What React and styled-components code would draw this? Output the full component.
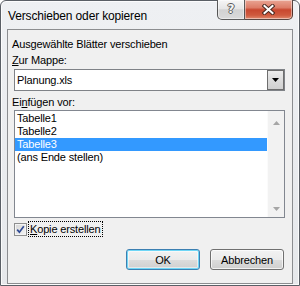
import React from 'react';
import styled, { createGlobalStyle, css } from 'styled-components';

const GlobalStyle = createGlobalStyle`
  html, body {
    margin: 0;
    padding: 0;
    background: #ffffff;
  }
  body {
    font-family: "Liberation Sans", Arial, sans-serif;
    color: #000;
  }
`;

const Window = styled.div`
  box-sizing: border-box;
  width: 300px;
  height: 286px;
  border: 1px solid #5a5f66;
  border-radius: 6px 6px 0 0;
  background: linear-gradient(#eef0f3, #e6e8eb);
  box-shadow: inset 0 0 0 1px rgba(255, 255, 255, 0.8);
  padding: 0 6px 1px 6px;
  display: flex;
  flex-direction: column;
`;

const TitleBar = styled.div`
  height: 28px;
  display: flex;
  align-items: flex-start;
`;

const TitleText = styled.div`
  padding: 7px 0 0 1px;
  font-size: 12px;
  line-height: 16px;
  letter-spacing: -0.15px;
`;

const CaptionGroup = styled.div`
  margin-left: auto;
  margin-top: -1px;
  display: flex;
`;

const CaptionButton = styled.div`
  box-sizing: border-box;
  height: 20px;
  display: flex;
  align-items: center;
  justify-content: center;
  border: 1px solid rgba(40, 40, 40, 0.75);
  border-top: none;
  box-shadow: inset 0 0 0 1px rgba(255, 255, 255, 0.45);
  ${(p) =>
    p.$close
      ? css`
          width: 48px;
          border-left: none;
          border-radius: 0 0 5px 0;
          background: linear-gradient(#e9a594 0%, #dd7d68 40%, #c8472f 52%, #cf5a3e 80%, #e08a6e 100%);
        `
      : css`
          width: 28px;
          border-radius: 0 0 0 5px;
          background: linear-gradient(#f6f6f6 0%, #e6e6e6 45%, #d2d2d2 52%, #dadada 100%);
        `}
`;

const HelpGlyph = styled.span`
  font-family: "DejaVu Sans", sans-serif;
  font-weight: bold;
  font-size: 12px;
  line-height: 12px;
  margin-top: -1px;
  color: #f4f4f4;
  text-shadow: 1px 0 0 #5c5c5c, -1px 0 0 #5c5c5c, 0 1px 0 #5c5c5c, 0 -1px 0 #5c5c5c;
`;

const Client = styled.div`
  flex: 1;
  box-sizing: border-box;
  border: 1px solid #8b8d90;
  background: #f0f0f0;
  padding: 6px 7px 0 4px;
  display: flex;
  flex-direction: column;
  font-size: 11px;
  letter-spacing: -0.15px;
`;

const Label = styled.div`
  height: 16px;
  line-height: 16px;
  margin-top: ${(p) => p.$gap || 0}px;
  white-space: nowrap;
`;

const Key = styled.span`
  text-decoration: underline;
  text-underline-offset: 1px;
`;

const Combo = styled.div`
  box-sizing: border-box;
  margin: 1px 0 0 2px;
  height: 22px;
  border: 1px solid #7f8287;
  background: #fff;
  display: flex;
  align-items: stretch;
`;

const ComboText = styled.div`
  flex: 1;
  padding-left: 2px;
  line-height: 20px;
`;

const DropButton = styled.div`
  box-sizing: border-box;
  width: 17px;
  border: 1px solid #6e6e6e;
  background: linear-gradient(#ececec, #dcdcdc 50%, #d0d0d0);
  display: flex;
  align-items: center;
  justify-content: center;
`;

const ListBox = styled.div`
  box-sizing: border-box;
  margin: 0 0 0 2px;
  height: 108px;
  border: 1px solid #828790;
  background: #fff;
  display: flex;
`;

const Items = styled.div`
  flex: 1;
  padding-top: 1px;
`;

const Item = styled.div`
  height: 13px;
  line-height: 13px;
  padding-left: 2px;
  white-space: nowrap;
  background: ${(p) => (p.$selected ? '#3399ff' : 'transparent')};
  color: ${(p) => (p.$selected ? '#ffffff' : '#000000')};
`;

const ScrollBar = styled.div`
  width: 17px;
  box-sizing: border-box;
  border-left: 1px solid #fbfbfb;
  background: #f2f2f2;
  display: flex;
  flex-direction: column;
  justify-content: space-between;
`;

const ScrollArrow = styled.div`
  height: 17px;
  display: flex;
  align-items: center;
  justify-content: center;
  padding-top: ${(p) => (p.$down ? 0 : 3)}px;
`;

const CheckRow = styled.div`
  margin: 3px 0 0 2px;
  height: 16px;
  display: flex;
  align-items: flex-start;
`;

const CheckBox = styled.div`
  box-sizing: border-box;
  width: 13px;
  height: 13px;
  margin-top: 2px;
  border: 1px solid #8e8f8f;
  background: linear-gradient(135deg, #d6d6d6, #f4f4f4);
  box-shadow: inset 0 0 0 1px #f4f4f4;
  display: flex;
  align-items: center;
  justify-content: center;
`;

const CheckLabel = styled.div`
  box-sizing: border-box;
  margin-left: 1px;
  height: 16px;
  padding: 0 1px;
  line-height: 14px;
  border: 1px dotted #000;
`;

const ButtonRow = styled.div`
  margin-top: 12px;
  padding-right: 1px;
  display: flex;
  justify-content: flex-end;
  gap: 10px;
`;

const Button = styled.div`
  box-sizing: border-box;
  width: 74px;
  height: 21px;
  border-radius: 3px;
  display: flex;
  align-items: center;
  justify-content: center;
  background: linear-gradient(#f2f2f2 0%, #ebebeb 50%, #dddddd 51%, #cfcfcf 100%);
  ${(p) =>
    p.$default
      ? css`
          border: 1px solid #3c7fb1;
          box-shadow: inset 0 0 0 1px #6fd6f6, inset 0 0 0 2px rgba(255, 255, 255, 0.5);
        `
      : css`
          border: 1px solid #707070;
          box-shadow: inset 0 0 0 1px rgba(255, 255, 255, 0.7);
        `}
`;

const CloseIcon = () => (
  <svg width="13" height="11" viewBox="0 0 13 11">
    <path d="M2.5 2 L10.5 9 M10.5 2 L2.5 9" stroke="#4a2a22" strokeWidth="4" strokeLinecap="square" />
    <path d="M2.5 2 L10.5 9 M10.5 2 L2.5 9" stroke="#ffffff" strokeWidth="2" strokeLinecap="square" />
  </svg>
);

const Triangle = ({ down, color, w = 7, h = 4 }) => (
  <svg width={w} height={h} viewBox={`0 0 ${w} ${h}`}>
    <path d={down ? `M0 0 H${w} L${w / 2} ${h} Z` : `M0 ${h} H${w} L${w / 2} 0 Z`} fill={color} />
  </svg>
);

const CheckMark = () => (
  <svg width="9" height="9" viewBox="0 0 9 9">
    <path d="M1.2 4.6 L3.4 7.2 L7.8 1.2" stroke="#2f4a94" strokeWidth="1.7" fill="none" />
  </svg>
);

const sheets = ['Tabelle1', 'Tabelle2', 'Tabelle3', '(ans Ende stellen)'];

export default function App() {
  return (
    <>
      <GlobalStyle />
      <Window>
        <TitleBar>
          <TitleText>Verschieben oder kopieren</TitleText>
          <CaptionGroup>
            <CaptionButton>
              <HelpGlyph>?</HelpGlyph>
            </CaptionButton>
            <CaptionButton $close>
              <CloseIcon />
            </CaptionButton>
          </CaptionGroup>
        </TitleBar>
        <Client>
          <Label>Ausgewählte Blätter verschieben</Label>
          <Label>
            <Key>Z</Key>ur Mappe:
          </Label>
          <Combo>
            <ComboText>Planung.xls</ComboText>
            <DropButton>
              <Triangle down color="#000" />
            </DropButton>
          </Combo>
          <Label $gap={3}>
            Ei<Key>n</Key>fügen vor:
          </Label>
          <ListBox>
            <Items>
              {sheets.map((s, i) => (
                <Item key={s} $selected={i === 2}>
                  {s}
                </Item>
              ))}
            </Items>
            <ScrollBar>
              <ScrollArrow>
                <Triangle color="#a6a6a6" />
              </ScrollArrow>
              <ScrollArrow $down>
                <Triangle down color="#a6a6a6" />
              </ScrollArrow>
            </ScrollBar>
          </ListBox>
          <CheckRow>
            <CheckBox>
              <CheckMark />
            </CheckBox>
            <CheckLabel>
              <Key>K</Key>opie erstellen
            </CheckLabel>
          </CheckRow>
          <ButtonRow>
            <Button $default>OK</Button>
            <Button>Abbrechen</Button>
          </ButtonRow>
        </Client>
      </Window>
    </>
  );
}
